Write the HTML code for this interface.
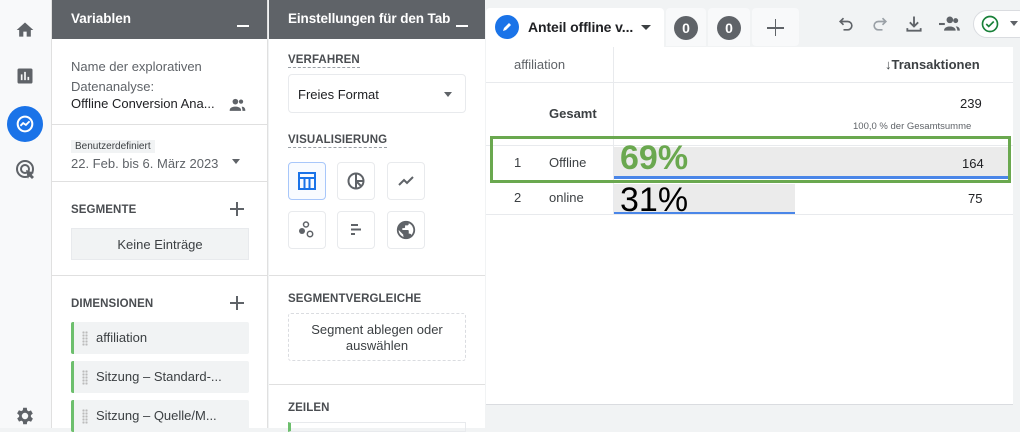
<!DOCTYPE html>
<html><head><meta charset="utf-8"><style>
*{box-sizing:border-box;margin:0;padding:0}
body{width:1020px;height:428px;overflow:hidden;background:#f1f3f4;font-family:"Liberation Sans",sans-serif;color:#202124;position:relative}
.a{position:absolute}
.hdr{background:#5f6368;color:#fff;font-weight:bold;font-size:13.5px;height:39px;padding:11px 0 0 19px}
.min{position:absolute;right:18px;top:25px;width:12px;height:2px;background:#fff}
.lbl{font-size:11.5px;color:#4a4d51;font-weight:bold;letter-spacing:.1px}
.ib{position:absolute;width:38px;height:38px;border:1px solid #e8eaed;border-radius:4px;background:#fff}
.dim{position:absolute;left:71px;width:178px;height:32px;background:#f1f3f4;border-left:3px solid #6dbf6d;font-size:13px;color:#3c4043;padding:8px 0 0 22px;border-radius:2px}
.dim:before{content:"";position:absolute;left:8px;top:9px;width:6px;height:15px;background:radial-gradient(circle,#bbb 1px,transparent 1.3px) 0 0/3px 3px}
.t{font-size:13px;color:#3c4043}
</style></head><body>
<div class="a" style="left:0;top:0;width:52px;height:428px;background:#f8f9fa;border-right:1px solid #e0e0e0"></div>
<svg class="a" style="left:15px;top:20px" width="20" height="20" viewBox="0 0 24 24"><path d="M10 20v-6h4v6h5v-8h3L12 3 2 12h3v8z" fill="#5f6368"/></svg>
<svg class="a" style="left:15px;top:66px" width="20" height="20" viewBox="0 0 24 24"><path d="M19 3H5a2 2 0 00-2 2v14a2 2 0 002 2h14a2 2 0 002-2V5a2 2 0 00-2-2zM9 17H7v-7h2zm4 0h-2V7h2zm4 0h-2v-4h2z" fill="#5f6368"/></svg>
<div class="a" style="left:7px;top:106px;width:36px;height:36px;border-radius:50%;background:#1a73e8"></div>
<svg class="a" style="left:14px;top:113px" width="22" height="22" viewBox="0 0 24 24"><circle cx="12" cy="12" r="8" fill="none" stroke="#fff" stroke-width="2.2"/><path d="M7 14l3-3 3 2 4-4" fill="none" stroke="#fff" stroke-width="2"/></svg>
<svg class="a" style="left:14px;top:158px" width="24" height="24" viewBox="0 0 24 24"><circle cx="11" cy="11" r="8" fill="none" stroke="#5f6368" stroke-width="2"/><circle cx="11" cy="11" r="4" fill="none" stroke="#5f6368" stroke-width="2"/><path d="M12 12l8 3-3 1 3 3-2 2-3-3-1 3z" fill="#5f6368"/></svg>
<svg class="a" style="left:14px;top:405px" width="22" height="22" viewBox="0 0 24 24"><path d="M19.4 13a7.5 7.5 0 000-2l2.1-1.6-2-3.5-2.5 1a7 7 0 00-1.7-1L15 3h-4l-.4 2.7a7 7 0 00-1.7 1l-2.5-1-2 3.5L6.6 11a7.5 7.5 0 000 2l-2.1 1.6 2 3.5 2.5-1a7 7 0 001.7 1L11 21h4l.4-2.7a7 7 0 001.7-1l2.5 1 2-3.5zM13 15.5a3.5 3.5 0 110-7 3.5 3.5 0 010 7z" fill="#5f6368" transform="translate(-1 0)"/></svg>

<div class="a" style="left:52px;top:0;width:216px;height:428px;background:#fff;border-right:1px solid #e0e0e0">
<div class="hdr">Variablen<div class="min"></div></div>
</div>
<div class="a t" style="left:71px;top:57px;line-height:19.5px;color:#5f6368">Name der explorativen<br>Datenanalyse:</div>
<div class="a t" style="left:71px;top:96px;color:#202124">Offline Conversion Ana...</div>
<svg class="a" style="left:229px;top:97px" width="17" height="15" viewBox="0 0 24 20"><circle cx="9" cy="6" r="4" fill="#5f6368"/><path d="M1 18c0-4 5-5 8-5s8 1 8 5v1H1z" fill="#5f6368"/><circle cx="17" cy="6" r="3" fill="#5f6368"/><path d="M18 13c3 0 5 2 5 5v1h-4c0-3-1-5-1-6z" fill="#5f6368"/></svg>
<div class="a" style="left:52px;top:124px;width:216px;height:1px;background:#e0e0e0"></div>
<div class="a" style="left:71px;top:140px;background:#f1f3f4;font-size:10px;padding:1px 4px;color:#3c4043">Benutzerdefiniert</div>
<div class="a t" style="left:71px;top:156px;color:#5f6368">22. Feb. bis 6. März 2023</div>
<div class="a" style="left:232px;top:159px;border:4px solid transparent;border-top:5px solid #5f6368"></div>
<div class="a" style="left:52px;top:181px;width:216px;height:1px;background:#e0e0e0"></div>
<div class="a lbl" style="left:71px;top:204px">SEGMENTE</div>
<div class="a" style="left:230px;top:208px;width:14px;height:1.6px;background:#5f6368"></div><div class="a" style="left:236.2px;top:202px;width:1.6px;height:14px;background:#5f6368"></div>
<div class="a t" style="left:71px;top:228px;width:178px;height:32px;background:#f1f3f4;border:1px solid #e8eaed;text-align:center;padding-top:8px">Keine Einträge</div>
<div class="a" style="left:52px;top:275px;width:216px;height:1px;background:#e0e0e0"></div>
<div class="a lbl" style="left:71px;top:298px">DIMENSIONEN</div>
<div class="a" style="left:230px;top:302px;width:14px;height:1.6px;background:#5f6368"></div><div class="a" style="left:236.2px;top:296px;width:1.6px;height:14px;background:#5f6368"></div>
<div class="dim" style="top:322px">affiliation</div>
<div class="dim" style="top:361px">Sitzung – Standard-...</div>
<div class="dim" style="top:400px">Sitzung – Quelle/M...</div>

<div class="a" style="left:269px;top:0;width:216px;height:428px;background:#fff">
<div class="hdr" style="letter-spacing:-.1px">Einstellungen für den Tab<div class="min" style="right:17px"></div></div>
</div>
<div class="a lbl" style="left:288px;top:54px;border-bottom:1px dashed #9aa0a6;padding-bottom:1px">VERFAHREN</div>
<div class="a t" style="left:288px;top:74px;width:178px;height:39px;border:1px solid #e8eaed;border-radius:4px;padding:12px 0 0 9px;color:#202124">Freies Format</div>
<div class="a" style="left:444px;top:92px;border:4px solid transparent;border-top:5px solid #5f6368"></div>
<div class="a lbl" style="left:288px;top:134px;border-bottom:1px dashed #9aa0a6;padding-bottom:1px">VISUALISIERUNG</div>
<div class="ib" style="left:288px;top:162px;border-color:#a8c7fa;background:#f8fbff"></div>
<svg class="a" style="left:297px;top:171px" width="20" height="20" viewBox="0 0 20 20"><rect x="2" y="2" width="16" height="16" fill="none" stroke="#1a73e8" stroke-width="2"/><path d="M2 7h16M7.5 7v11M12.5 7v11" stroke="#1a73e8" stroke-width="2"/></svg>
<div class="ib" style="left:337px;top:162px"></div>
<svg class="a" style="left:346px;top:171px" width="20" height="20" viewBox="0 0 20 20"><circle cx="10" cy="10" r="7.5" fill="none" stroke="#5f6368" stroke-width="2"/><path d="M10 2.5v15M10 10h7.5M10 10l5 5" stroke="#5f6368" stroke-width="2"/></svg>
<div class="ib" style="left:387px;top:162px"></div>
<svg class="a" style="left:396px;top:171px" width="20" height="20" viewBox="0 0 20 20"><path d="M3 14l5-5 3 3 6-6" fill="none" stroke="#5f6368" stroke-width="2"/></svg>
<div class="ib" style="left:288px;top:211px"></div>
<svg class="a" style="left:297px;top:220px" width="20" height="20" viewBox="0 0 20 20"><circle cx="9" cy="4.5" r="2.5" fill="none" stroke="#5f6368" stroke-width="1.5"/><circle cx="5" cy="11" r="3" fill="#5f6368"/><circle cx="13" cy="14" r="2.7" fill="none" stroke="#5f6368" stroke-width="1.5"/></svg>
<div class="ib" style="left:337px;top:211px"></div>
<svg class="a" style="left:346px;top:220px" width="20" height="20" viewBox="0 0 20 20"><path d="M5 5h7M5 9.5h10M5 14h4" stroke="#5f6368" stroke-width="2"/></svg>
<div class="ib" style="left:387px;top:211px"></div>
<svg class="a" style="left:395px;top:219px" width="22" height="22" viewBox="0 0 24 24"><path d="M12 2a10 10 0 100 20 10 10 0 000-20zm-1 17.9A8 8 0 014 12l5 5v1a2 2 0 002 2zm6.9-2.5A2 2 0 0016 16h-1v-3a1 1 0 00-1-1H8v-2h2a1 1 0 001-1V7h2a2 2 0 002-2v-.4a8 8 0 012.9 12.8z" fill="#5f6368"/></svg>
<div class="a" style="left:269px;top:275px;width:216px;height:1px;background:#e0e0e0"></div>
<div class="a lbl" style="left:288px;top:293px">SEGMENTVERGLEICHE</div>
<div class="a t" style="left:288px;top:313px;width:178px;height:48px;border:1px dashed #dadce0;border-radius:3px;text-align:center;padding-top:8px;line-height:16px">Segment ablegen oder<br>auswählen</div>
<div class="a" style="left:269px;top:384px;width:216px;height:1px;background:#e0e0e0"></div>
<div class="a lbl" style="left:288px;top:402px">ZEILEN</div>
<div class="a" style="left:288px;top:422px;width:178px;height:10px;border:1px solid #e8eaed;border-left:3px solid #6dbf6d"></div>

<div class="a" style="left:485px;top:0;width:535px;height:428px;background:#f1f3f4"></div>
<div class="a" style="left:486px;top:8px;width:178px;height:40px;background:#fff;border-radius:4px 4px 0 0"></div>
<div class="a" style="left:495px;top:15px;width:24px;height:24px;border-radius:50%;background:#1a73e8"></div>
<svg class="a" style="left:500px;top:20px" width="14" height="14" viewBox="0 0 14 14"><path d="M3 11l1-3 5-5 2 2-5 5z" fill="#fff"/></svg>
<div class="a" style="left:528px;top:19px;font-size:14px;font-weight:bold;color:#202124;letter-spacing:-.1px">Anteil offline v...</div>
<div class="a" style="left:641px;top:25px;border:5px solid transparent;border-top:5px solid #3c4043"></div>
<div class="a" style="left:666px;top:8px;width:40px;height:38px;background:#f8f9fa;border-radius:4px 4px 0 0"></div>
<div class="a" style="left:674px;top:16px;width:24px;height:24px;border-radius:50%;background:#5f6368;color:#fff;font-weight:bold;font-size:14px;text-align:center;line-height:24px">0</div>
<div class="a" style="left:708px;top:8px;width:42px;height:38px;background:#f8f9fa;border-radius:4px 4px 0 0"></div>
<div class="a" style="left:717px;top:16px;width:24px;height:24px;border-radius:50%;background:#5f6368;color:#fff;font-weight:bold;font-size:14px;text-align:center;line-height:24px">0</div>
<div class="a" style="left:752px;top:8px;width:47px;height:38px;background:#f8f9fa;border-radius:4px"></div>
<div class="a" style="left:767px;top:27px;width:17px;height:1.8px;background:#5f6368"></div><div class="a" style="left:774.6px;top:19px;width:1.8px;height:17px;background:#5f6368"></div>
<svg class="a" style="left:836px;top:14px" width="20" height="20" viewBox="0 0 24 24"><path d="M9 5L5 9l4 4M5 9h9a5 5 0 010 10H9" fill="none" stroke="#5f6368" stroke-width="2"/></svg>
<svg class="a" style="left:870px;top:14px" width="20" height="20" viewBox="0 0 24 24"><path d="M15 5l4 4-4 4M19 9h-9a5 5 0 000 10h5" fill="none" stroke="#9aa0a6" stroke-width="2"/></svg>
<svg class="a" style="left:904px;top:14px" width="20" height="20" viewBox="0 0 24 24"><path d="M12 3v12M7 10l5 5 5-5M4 17v3h16v-3" fill="none" stroke="#5f6368" stroke-width="2.2"/></svg>
<svg class="a" style="left:937px;top:14px" width="24" height="20" viewBox="0 0 28 24"><path d="M2 12h7" stroke="#5f6368" stroke-width="2.5"/><circle cx="15" cy="7" r="4" fill="#5f6368"/><path d="M8 20c0-4 4-5 7-5s7 1 7 5z" fill="#5f6368"/><circle cx="22" cy="8" r="3" fill="#5f6368"/><path d="M22 15c3 0 5 1 5 5h-3c0-2-1-4-2-5z" fill="#5f6368"/></svg>
<div class="a" style="left:973px;top:10px;width:60px;height:28px;border:1px solid #dadce0;border-radius:14px;background:#fff"></div>
<svg class="a" style="left:980px;top:14px" width="20" height="20" viewBox="0 0 24 24"><circle cx="12" cy="12" r="9" fill="none" stroke="#188038" stroke-width="2"/><path d="M7.5 12l3 3 6-6" fill="none" stroke="#188038" stroke-width="2"/></svg>
<div class="a" style="left:1010px;top:21px;border:4px solid transparent;border-top:5px solid #5f6368"></div>

<div class="a" style="left:486px;top:47px;width:527px;height:358px;background:#fff;border-bottom:1px solid #dadce0"></div>
<div class="a" style="left:613px;top:47px;width:1px;height:167px;background:#e8eaed"></div>
<div class="a" style="left:486px;top:82px;width:527px;height:1px;background:#e8eaed"></div>
<div class="a t" style="left:514px;top:57px;color:#5f6368">affiliation</div>
<div class="a" style="left:885px;top:57px;font-size:13px;font-weight:bold;color:#3c4043">↓Transaktionen</div>
<div class="a" style="left:549px;top:106px;font-size:13px;font-weight:bold;color:#3c4043">Gesamt</div>
<div class="a t" style="left:960px;top:96px;color:#202124">239</div>
<div class="a" style="left:853px;top:121px;font-size:9.5px;color:#5f6368">100,0 % der Gesamtsumme</div>
<div class="a" style="left:486px;top:145px;width:527px;height:1px;background:#e8eaed"></div>
<div class="a" style="left:614px;top:147px;width:396px;height:32px;background:#ebebeb;border-bottom:3px solid #4a86e8"></div>
<div class="a" style="left:614px;top:184px;width:181px;height:31px;background:#ebebeb;border-bottom:3px solid #4a86e8"></div>
<div class="a" style="left:486px;top:214px;width:527px;height:1px;background:#e8eaed"></div>
<div class="a t" style="left:514px;top:155px">1</div>
<div class="a t" style="left:549px;top:155px">Offline</div>
<div class="a t" style="left:962px;top:156px;color:#202124">164</div>
<div class="a t" style="left:514px;top:190px">2</div>
<div class="a t" style="left:549px;top:190px">online</div>
<div class="a t" style="left:968px;top:191px;color:#202124">75</div>
<div class="a" style="left:620px;top:139px;font-size:34px;font-weight:bold;color:#6aa84f">69%</div>
<div class="a" style="left:620px;top:181px;font-size:34px;color:#000">31%</div>
<div class="a" style="left:490px;top:136px;width:521px;height:47px;border:3px solid #6aa84f"></div>
</body></html>
